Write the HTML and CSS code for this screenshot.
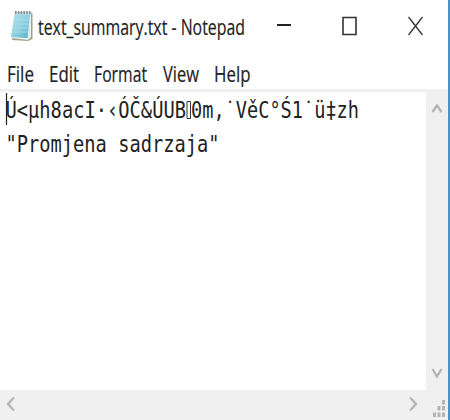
FILE: index.html
```
<!DOCTYPE html>
<html lang="en">
<head>
<meta charset="utf-8">
<title>text_summary.txt - Notepad</title>
<link rel="stylesheet" href="styles.css">
</head>
<body>
<div class="window">
  <header class="titlebar">
    <svg class="app-icon" width="25" height="33" viewBox="0 0 25 33">
      <defs><linearGradient id="pad" x1="0" y1="0" x2="1" y2="1"><stop offset="0" stop-color="#b5e2ec"/><stop offset=".55" stop-color="#8bcfe1"/><stop offset="1" stop-color="#58acc7"/></linearGradient></defs>
      <path d="M5 3 22.5 3 22.5 29 18 31 2 30z" fill="#a9a18d"/>
      <path d="M5 2 21 2 21 27 18 30 1 28z" fill="#e4eeee"/>
      <path d="M4.5 4 20 4 17.5 28 1 27z" fill="url(#pad)"/>
      <path d="M4 10H19M3.5 14H19M3 18H18M2 22H18" stroke="#b9e1e8" stroke-width=".7"/>
      <path d="M5 2.5H21" stroke="#64777b" stroke-width="2.6" stroke-dasharray="1.6 1.2"/>
    </svg>
    <svg class="title" width="208" height="33"><text x="0" y="24.5" textLength="207" lengthAdjust="spacingAndGlyphs">text_summary.txt - Notepad</text></svg>
    <div class="controls">
      <svg width="14" height="20" viewBox="0 0 14 20"><path d="M0 9H14" stroke="#222" stroke-width="2"/></svg>
      <svg width="15" height="20" viewBox="0 0 15 20"><path d="M1 1.5H14V18.5H1z" fill="none" stroke="#333" stroke-width="1.6"/></svg>
      <svg width="15" height="20" viewBox="0 0 15 20"><path d="M.5 1 14.5 19M14.5 1 .5 19" stroke="#333" stroke-width="1.3"/></svg>
    </div>
  </header>
  <nav class="menu">
    <svg width="26" height="32"><text x="-1" y="24.5" textLength="27" lengthAdjust="spacingAndGlyphs">File</text></svg>
    <svg width="29" height="32"><text x="-1" y="24.5" textLength="30" lengthAdjust="spacingAndGlyphs">Edit</text></svg>
    <svg width="52" height="32"><text x="-1" y="24.5" textLength="53" lengthAdjust="spacingAndGlyphs">Format</text></svg>
    <svg width="36" height="32"><text x="0" y="24.5" textLength="36" lengthAdjust="spacingAndGlyphs">View</text></svg>
    <svg width="36" height="32"><text x="-1" y="24.5" textLength="36.500" lengthAdjust="spacingAndGlyphs">Help</text></svg>
  </nav>
  <main class="body">
    <div class="editor">
      <svg class="line" width="400" height="34">
        <path d="M6.5 1V33" stroke="#222" stroke-width="1.2"/>
        <text x="5.5" y="25.5" textLength="180.5" lengthAdjust="spacingAndGlyphs">Ú&lt;µh8acI·‹ÓČ&amp;ÚUB</text>
        <path d="M187 9.5H190.5V26.5H187z" fill="none" stroke="#333"/>
        <text x="191" y="25.500" textLength="168" lengthAdjust="spacingAndGlyphs">0m,˙VěC°Ś1˙ü‡zh</text>
      </svg>
      <svg class="line" width="400" height="34"><text x="5.5" y="25.5" textLength="214" lengthAdjust="spacingAndGlyphs">"Promjena sadrzaja"</text></svg>
    </div>
    <div class="vscroll">
      <svg width="12" height="12" viewBox="0 0 12 12"><path d="M1.5 10 6 3.5 10.5 10"/></svg>
      <svg width="12" height="12" viewBox="0 0 12 12"><path d="M1.5 2 6 9.5 10.5 2"/></svg>
    </div>
  </main>
  <footer class="hscroll">
    <svg width="10" height="16" viewBox="0 0 10 16"><path d="M8 1.5 2 8 8 14.5"/></svg>
    <svg class="right" width="10" height="16" viewBox="0 0 10 16"><path d="M2 1.5 8 8 2 14.5"/></svg>
    <svg class="grip" width="14" height="18" viewBox="0 0 14 18"><path d="M10 0h3v4.500h-3zM10 6h3v4.500h-3zM5.500 6h3v4.500h-3zM10 12.500h3v4.500h-3zM5.500 12.500h3v4.500h-3zM1 12.500h3v4.500h-3z"/></svg>
  </footer>
</div>
</body>
</html>
```
FILE: styles.css
```
body {
  margin: 0;
  background: #fff;
}
.window {
  box-sizing: border-box;
  width: 450px;
  height: 420px;
  display: flex;
  flex-direction: column;
  border-right: 2px solid #4a94ce;
  overflow: hidden;
}
svg {
  display: block;
  flex: none;
}
.titlebar {
  display: flex;
  height: 50px;
  padding: 10px 0 0 10px;
  box-sizing: border-box;
}
.title {
  margin-left: 3px;
  overflow: visible;
}
.title text {
  font: 22px "Open Sans", sans-serif;
  fill: #222;
  stroke: #222;
  stroke-width: 0.2;
}
.controls {
  display: flex;
  gap: 51px;
  margin: 6px 0 0 31px;
}
.menu {
  display: flex;
  gap: 16px;
  height: 39px;
  padding: 7px 0 0 8px;
  box-sizing: border-box;
}
.menu svg {
  overflow: visible;
}
.menu text {
  font: 21px "Open Sans", sans-serif;
  fill: #222;
  stroke: #222;
  stroke-width: 0.2;
}
.body {
  display: flex;
  height: 301px;
  border-top: 3px solid #f0f0f0;
  box-sizing: border-box;
}
.editor {
  flex: 1;
}
.line text {
  font: 23px "DejaVu Sans Mono", monospace;
  fill: #222;
}
.vscroll {
  display: flex;
  flex-direction: column;
  justify-content: space-between;
  align-items: center;
  width: 22px;
  padding: 10px 0 11px;
  box-sizing: border-box;
  background: #f0f0f0;
}
.vscroll path,
.hscroll path {
  fill: none;
  stroke: #b5b5b5;
  stroke-width: 2.4;
}
.hscroll {
  display: flex;
  height: 30px;
  padding: 6px 2px 0 6px;
  box-sizing: border-box;
  background: #f0f0f0;
}
.right {
  margin-left: auto;
}
.grip {
  margin: 4px 0 0 14px;
}
.hscroll .grip path {
  fill: #b5b5b5;
  stroke: none;
}
```
